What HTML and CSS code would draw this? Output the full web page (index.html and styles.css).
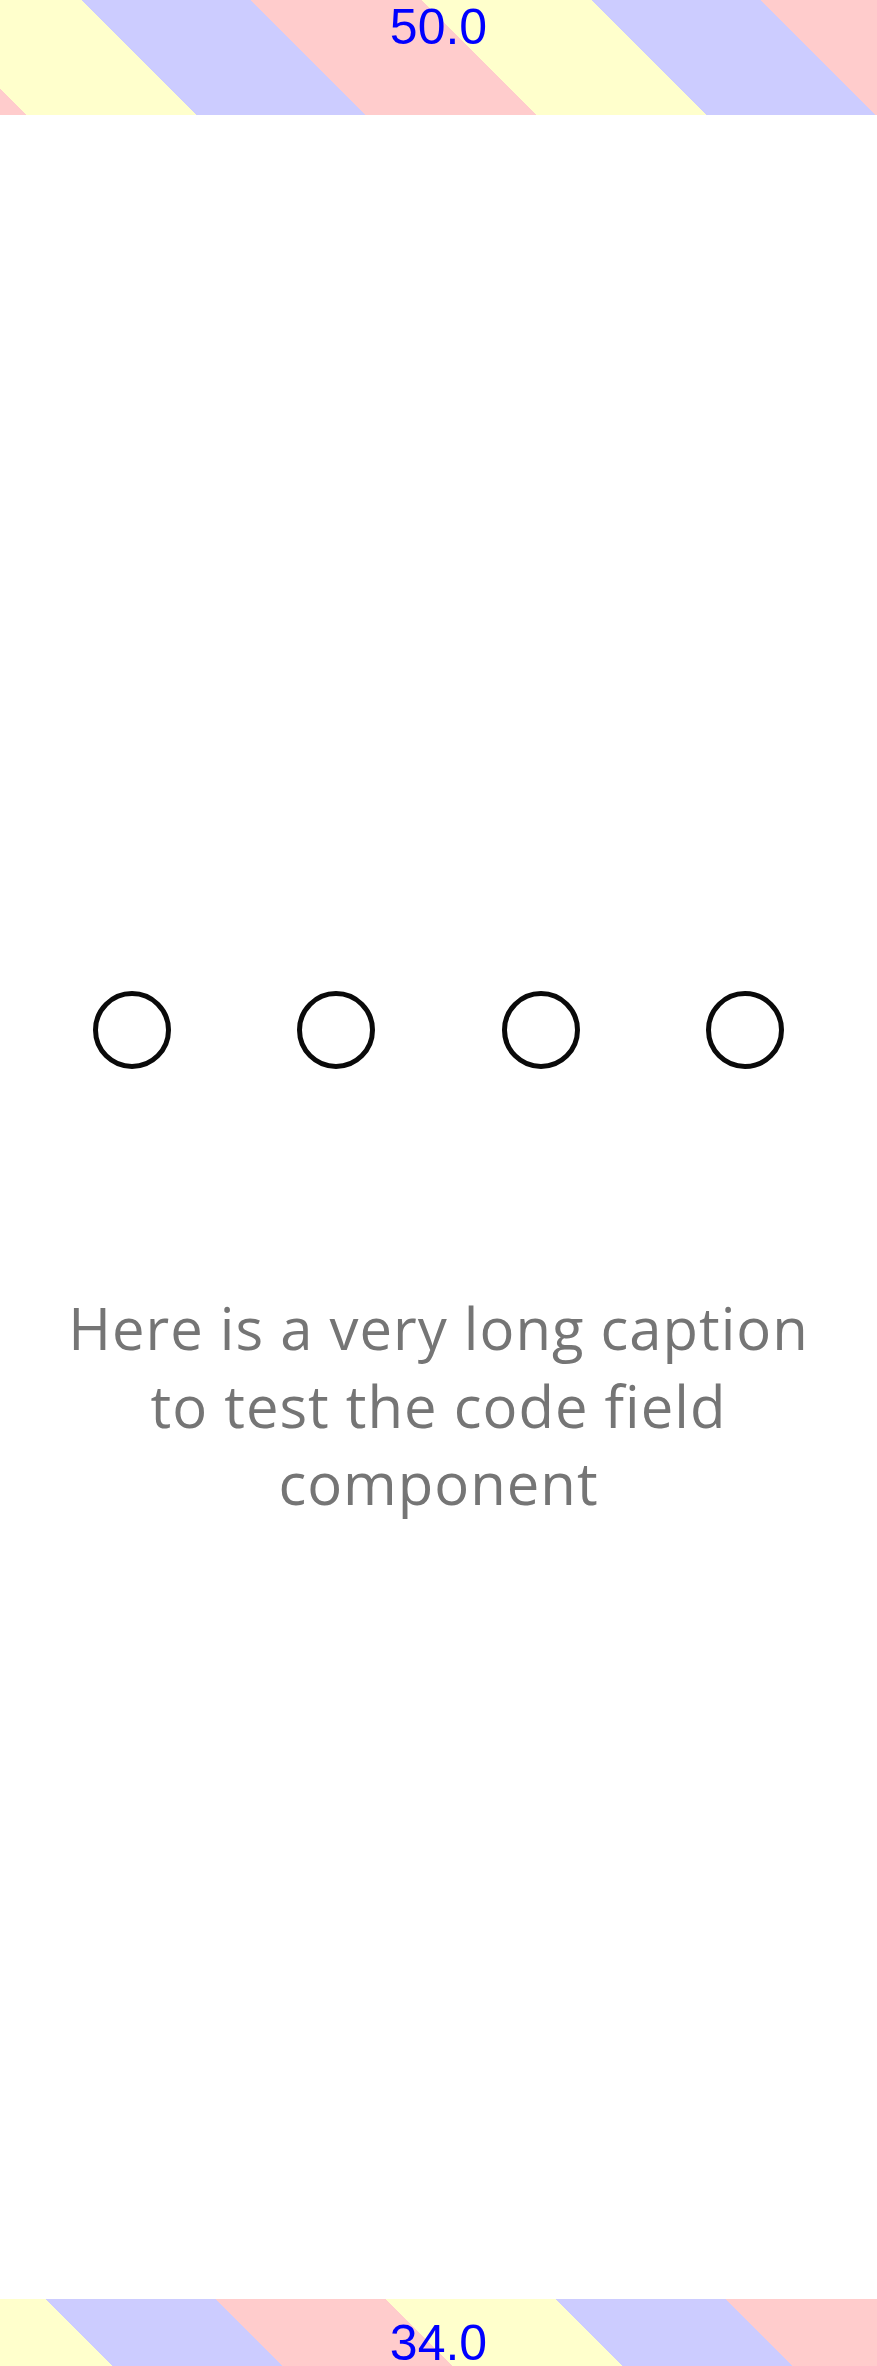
FILE: index.html
```html
<!DOCTYPE html>
<html lang="en">
<head>
<meta charset="utf-8">
<title>Code field</title>
<link rel="stylesheet" href="styles.css">
</head>
<body>
<div class="screen">
  <header class="inset inset-top">
    <span class="inset-label">50.0</span>
  </header>
  <main class="content">
    <div class="code-row">
      <div class="code-cell"><span class="code-dot"></span></div>
      <div class="code-cell"><span class="code-dot"></span></div>
      <div class="code-cell"><span class="code-dot"></span></div>
      <div class="code-cell"><span class="code-dot"></span></div>
    </div>
    <p class="caption">Here is a very long caption to test the code field component</p>
  </main>
  <footer class="inset inset-bottom">
    <span class="inset-label">34.0</span>
  </footer>
</div>
</body>
</html>
```
FILE: styles.css
```css
html, body {
  margin: 0;
  padding: 0;
  background: #ffffff;
}

.screen {
  width: 877px;
  height: 2366px;
  display: flex;
  flex-direction: column;
  overflow: hidden;
}

.inset {
  flex: none;
  display: flex;
  justify-content: center;
  align-items: flex-start;
  box-sizing: border-box;
}

.inset-top {
  height: 115px;
  padding-top: 4px;
  background: repeating-linear-gradient(45deg,
    #ffcccc 0 18.4px,
    #ffffcc 18.4px 138.6px,
    #ccccff 138.6px 258.8px,
    #ffcccc 258.8px 360.62px);
}

.inset-bottom {
  height: 67px;
  padding-top: 21px;
  background: repeating-linear-gradient(45deg,
    #ffffcc 0 79.9px,
    #ccccff 79.9px 200.1px,
    #ffcccc 200.1px 320.3px,
    #ffffcc 320.3px 360.62px);
}

.inset-label {
  font-family: "Liberation Sans", Arial, sans-serif;
  font-size: 50px;
  line-height: 46px;
  color: #0000ff;
}

.content {
  flex: 1;
  display: flex;
  flex-direction: column;
  align-items: stretch;
}

.code-row {
  margin-top: 876px;
  padding: 0 30px;
  display: flex;
}

.code-cell {
  flex: 1;
  display: flex;
  justify-content: center;
}

.code-dot {
  width: 78px;
  height: 78px;
  box-sizing: border-box;
  border: 5px solid #0a0a0a;
  border-radius: 50%;
}

.caption {
  margin: 220px 54px 0;
  font-family: "Open Sans", "Noto Sans", sans-serif;
  font-size: 58px;
  letter-spacing: 1px;
  line-height: 77.5px;
  color: #757575;
  text-align: center;
}
```
